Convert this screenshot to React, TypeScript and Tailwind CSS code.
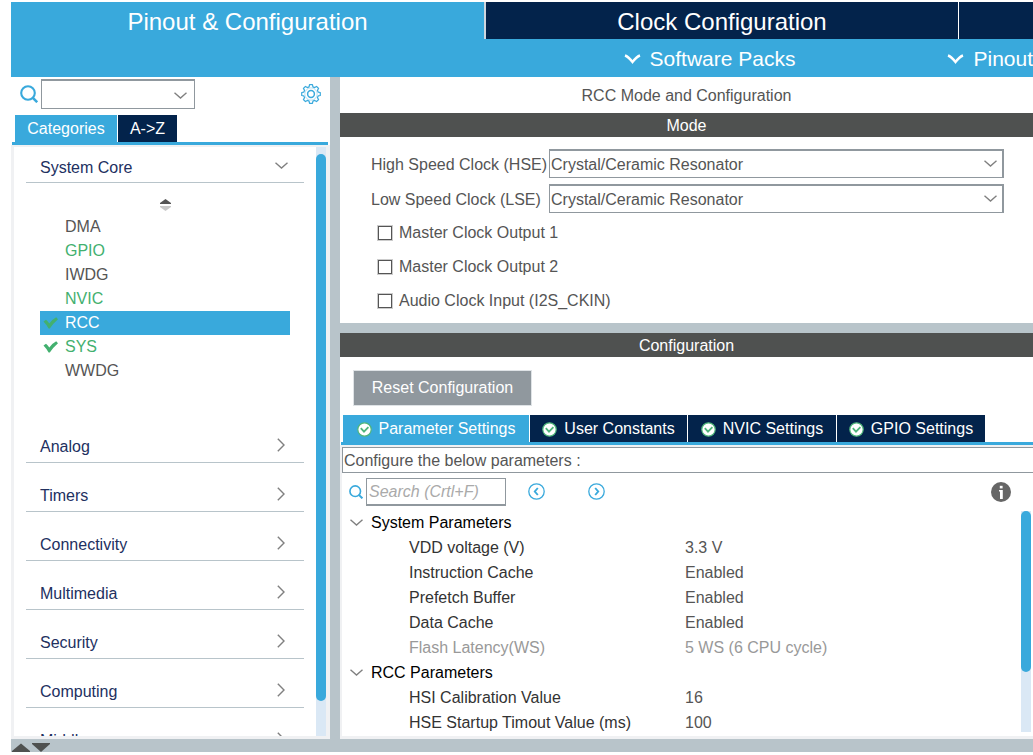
import React, { useState } from 'react';
import clsx from 'clsx';

type Peripheral = {
  name: string;
  configured?: boolean;
  checked?: boolean;
};

type Parameter = {
  name: string;
  value: string;
  readOnly?: boolean;
};

const peripherals: Peripheral[] = [
  { name: 'DMA' },
  { name: 'GPIO', configured: true },
  { name: 'IWDG' },
  { name: 'NVIC', configured: true },
  { name: 'RCC', configured: true, checked: true },
  { name: 'SYS', configured: true, checked: true },
  { name: 'WWDG' },
];

const categories = [
  'Analog',
  'Timers',
  'Connectivity',
  'Multimedia',
  'Security',
  'Computing',
  'Middleware',
];

const clockOutputs = ['Master Clock Output 1', 'Master Clock Output 2', 'Audio Clock Input (I2S_CKIN)'];

const settingsTabs = [
  { label: 'Parameter Settings', width: 'w-[187px]' },
  { label: 'User Constants', width: 'w-[158px]' },
  { label: 'NVIC Settings', width: 'w-[149px]' },
  { label: 'GPIO Settings', width: 'w-[149px]' },
];

const parameterGroups: { title: string; rows: Parameter[] }[] = [
  {
    title: 'System Parameters',
    rows: [
      { name: 'VDD voltage (V)', value: '3.3 V' },
      { name: 'Instruction Cache', value: 'Enabled' },
      { name: 'Prefetch Buffer', value: 'Enabled' },
      { name: 'Data Cache', value: 'Enabled' },
      { name: 'Flash Latency(WS)', value: '5 WS (6 CPU cycle)', readOnly: true },
    ],
  },
  {
    title: 'RCC Parameters',
    rows: [
      { name: 'HSI Calibration Value', value: '16' },
      { name: 'HSE Startup Timout Value (ms)', value: '100' },
    ],
  },
];

function ChevronDown({ className }: { className?: string }) {
  return (
    <svg viewBox="0 0 13 7" className={clsx('h-[7px] w-[13px] shrink-0', className)} fill="none">
      <path d="M0.5 0.8 L6.5 6 L12.5 0.8" stroke="currentColor" strokeWidth="1.4" />
    </svg>
  );
}

function ChevronRight() {
  return (
    <svg viewBox="0 0 8 14" className="h-[14px] w-2 shrink-0 text-[#808080]" fill="none">
      <path d="M0.8 0.8 L7 7 L0.8 13.2" stroke="currentColor" strokeWidth="1.4" />
    </svg>
  );
}

function MenuChevron() {
  return (
    <svg viewBox="0 0 17 10" className="h-[10px] w-[17px] shrink-0" fill="none">
      <path d="M1 1.5 C4 2.5 6.5 5.5 8.5 8 C10.5 5.5 13 2.5 16 1.5" stroke="currentColor" strokeWidth="2.4" />
    </svg>
  );
}

function SearchIcon({ className }: { className?: string }) {
  return (
    <svg viewBox="0 0 18 18" className={clsx('shrink-0 text-[#39a9dc]', className)} fill="none" stroke="currentColor">
      <circle cx="8" cy="8" r="6.8" strokeWidth="2.1" />
      <path d="M12.4 12.4 L17.2 17.2" strokeWidth="2.6" />
    </svg>
  );
}

// Eight teeth, four points each, around the centre of a 20x20 box
const gearPoints = Array.from({ length: 8 }, (_, tooth) =>
  [
    [-15, 7.4],
    [-9, 9.4],
    [9, 9.4],
    [15, 7.4],
  ]
    .map(([offset, radius]) => {
      const angle = ((tooth * 45 + offset) * Math.PI) / 180;
      return `${(10 + radius * Math.sin(angle)).toFixed(2)},${(10 - radius * Math.cos(angle)).toFixed(2)}`;
    })
    .join(' ')
).join(' ');

function GearIcon() {
  return (
    <svg viewBox="0 0 20 20" className="h-5 w-5" fill="none" stroke="currentColor" strokeLinejoin="round">
      <polygon points={gearPoints} strokeWidth="1.2" />
      <circle cx="10" cy="10" r="6.2" strokeWidth="0.6" opacity="0.6" />
      <circle cx="10" cy="10" r="3.4" strokeWidth="1.5" />
    </svg>
  );
}

function CheckMark() {
  return (
    <svg viewBox="0 0 15 12" className="h-3 w-[15px]" fill="#43b06f">
      <path d="M0.5 4.5 L3 2.8 Q5 4.5 6.3 6.6 Q9 2.5 13.2 0.3 L15 2.2 Q10.5 6 6.8 11.6 L5.6 11.6 Q3.4 7.5 0.5 4.5 Z" />
    </svg>
  );
}

function StatusIcon() {
  return (
    <svg viewBox="0 0 15 15" className="h-[15px] w-[15px] shrink-0" fill="none" stroke="#4fb57a">
      <circle cx="7.5" cy="7.5" r="6.7" fill="#fff" strokeWidth="1.2" />
      <path d="M3.8 6.2 L7 9.6 L11.4 5.2" strokeWidth="1.8" />
    </svg>
  );
}

function CircleArrow({ flip }: { flip?: boolean }) {
  return (
    <svg
      viewBox="0 0 17 17"
      className={clsx('h-[17px] w-[17px] text-[#39a9dc]', flip && 'rotate-180')}
      fill="none"
      stroke="currentColor"
    >
      <circle cx="8.5" cy="8.5" r="7.7" strokeWidth="1.3" />
      <path d="M9.8 5 L6.8 8.5 L9.8 12" strokeWidth="1.9" />
    </svg>
  );
}

function InfoIcon() {
  return (
    <svg viewBox="0 0 20 20" className="h-5 w-5">
      <circle cx="10" cy="10" r="10" fill="#666" />
      <rect x="8.8" y="3.8" width="2.8" height="2.6" fill="#fff" />
      <path d="M8 8 H11.8 V17 H9 V9.4 H8 Z" fill="#fff" />
    </svg>
  );
}

function SectionBar({ title }: { title: string }) {
  return (
    <h2 className="h-6 shrink-0 bg-[#4f5150] pt-px text-center text-base leading-6 text-white">{title}</h2>
  );
}

function ClockSelect({ id, label }: { id: string; label: string }) {
  return (
    <div className="flex items-center">
      <label htmlFor={id} className="w-[178px] shrink-0 pt-[2px] whitespace-nowrap">
        {label}
      </label>
      <div className="relative flex-1">
        <select
          id={id}
          className="block h-[29px] w-full appearance-none border border-t-2 border-r-2 border-[#90989e] bg-white pt-px pl-[1px] text-base"
        >
          <option>Crystal/Ceramic Resonator</option>
        </select>
        <ChevronDown className="pointer-events-none absolute top-[11px] right-[7px] text-[#808080]" />
      </div>
    </div>
  );
}

function Header() {
  return (
    <header className="shrink-0 text-white">
      <nav className="flex h-[37px] overflow-hidden text-2xl">
        <button className="w-[473px] shrink-0 bg-[#39a9dc] pt-[2px]">Pinout &amp; Configuration</button>
        <button className="w-[474px] shrink-0 border-l-2 border-[#cfd6de] bg-[#03234b] pt-[2px]">
          Clock Configuration
        </button>
        <button aria-label="Project Manager" className="flex-1 border-l border-white bg-[#03234b]" />
      </nav>
      <div className="flex h-[38px] items-center justify-end gap-[152px] overflow-hidden bg-[#39a9dc] pt-[2px] text-[21px]">
        <button className="flex items-center gap-[9px] whitespace-nowrap">
          <MenuChevron />
          Software Packs
        </button>
        <button className="flex items-center gap-[9px] whitespace-nowrap">
          <MenuChevron />
          Pinout
        </button>
      </div>
    </header>
  );
}

function Sidebar() {
  const [selected, setSelected] = useState('RCC');

  return (
    <aside className="flex w-[319px] shrink-0 flex-col">
      <div className="flex h-[38px] shrink-0 items-center pr-[9px] pb-1 pl-[9px]">
        <SearchIcon className="h-[18px] w-[18px]" />
        <div className="relative ml-[3px]">
          <select
            aria-label="Search peripheral"
            className="block h-[30px] w-[154px] appearance-none border border-t-2 border-[#90989e] bg-white"
          />
          <ChevronDown className="pointer-events-none absolute top-[13px] right-[8px] text-[#808080]" />
        </div>
        <button aria-label="Settings" className="ml-auto text-[#39a9dc]">
          <GearIcon />
        </button>
      </div>

      <div className="mr-[2px] ml-px flex shrink-0 gap-px border-b-[3px] border-[#39a9dc] pl-[3px] text-base text-white">
        <button className="h-[27px] w-[102px] bg-[#39a9dc] pt-px">Categories</button>
        <button className="h-[27px] w-[59px] bg-[#03234b] pt-px">A-&gt;Z</button>
      </div>

      <div className="flex min-h-0 flex-1 border-[3px] border-t-2 border-r-4 border-[#f0f1f3]">
        <div className="min-w-0 flex-1 overflow-hidden pr-3 pl-3">
          <button className="flex h-9 w-full items-end justify-between border-b border-[#b8c4ca] pr-4 pb-[2px] pl-[14px] text-[#22305f]">
            <span className="text-base leading-6">System Core</span>
            <ChevronDown className="mb-[11px] text-[#808080]" />
          </button>

          <div className="pr-[14px] pb-[31px] pl-[14px]">
            <button aria-label="Sort" className="mt-4 mb-1 block w-full">
              <svg viewBox="0 0 11 12" className="mx-auto h-3 w-[11px]">
                <path d="M5.5 0 L11 4 V5 H0 V4 Z" fill="#555" />
                <path d="M0 7 H11 V8 L5.5 12 L0 8 Z" fill="#c8c8c8" />
              </svg>
            </button>
            <ul className="text-base">
              {peripherals.map(p => (
                <li key={p.name}>
                  <button
                    onClick={() => setSelected(p.name)}
                    className={clsx(
                      'flex h-6 w-full items-center',
                      selected === p.name && 'bg-[#39a9dc] text-white',
                      selected !== p.name && (p.configured ? 'text-[#43b06f]' : 'text-[#555]')
                    )}
                  >
                    <span className="flex w-[25px] justify-start pl-[3px]">
                      {p.checked && <CheckMark />}
                    </span>
                    {p.name}
                  </button>
                </li>
              ))}
            </ul>
          </div>

          {categories.map(name => (
            <button
              key={name}
              className="flex h-[49px] w-full items-end justify-between border-b border-[#b8c4ca] pr-[19px] pb-[3px] pl-[14px] text-[#22305f]"
            >
              <span className="text-base leading-6">{name}</span>
              <span className="mb-[7px]">
                <ChevronRight />
              </span>
            </button>
          ))}
        </div>
        <div className="w-[10px] shrink-0 bg-[#dae8f5] pt-[7px]">
          <div className="h-[94%] rounded-full bg-[#39a9dc]" />
        </div>
      </div>
    </aside>
  );
}

function ModePanel() {
  return (
    <section className="shrink-0 text-base text-[#555]">
      <h1 className="h-9 pt-px text-center text-base leading-9">RCC Mode and Configuration</h1>
      <SectionBar title="Mode" />
      <div className="flex h-[186px] flex-col pt-3 pr-[29px] pl-[31px]">
        <div className="flex flex-col gap-[6px]">
          <ClockSelect id="hse" label="High Speed Clock (HSE)" />
          <ClockSelect id="lse" label="Low Speed Clock (LSE)" />
        </div>
        <div className="mt-2 flex flex-col gap-[10px] pl-[6px]">
          {clockOutputs.map(label => (
            <label key={label} className="flex h-6 items-center gap-[6px]">
              <input
                type="checkbox"
                className="m-px h-[14px] w-[14px] appearance-none border border-[#555] bg-white ring-1 ring-[#ccc]"
              />
              {label}
            </label>
          ))}
        </div>
      </div>
    </section>
  );
}

function ParameterTable() {
  return (
    <table className="min-w-0 flex-1 table-fixed self-start text-left text-base">
      <colgroup>
        <col className="w-[343px]" />
        <col />
      </colgroup>
      {parameterGroups.map(group => (
        <tbody key={group.title}>
          <tr className="h-[25px]">
            <th colSpan={2} className="p-0 font-normal text-black">
              <button className="flex h-[25px] items-center gap-2 pl-2">
                <ChevronDown className="text-[#808080]" />
                {group.title}
              </button>
            </th>
          </tr>
          {group.rows.map(row => (
            <tr key={row.name} className={clsx('h-[25px]', row.readOnly ? 'text-[#999]' : 'text-[#333]')}>
              <td className="p-0 pl-[67px] leading-6">{row.name}</td>
              <td className={clsx('p-0 leading-6', !row.readOnly && 'text-[#555]')}>{row.value}</td>
            </tr>
          ))}
        </tbody>
      ))}
    </table>
  );
}

function ConfigurationPanel() {
  const [activeTab, setActiveTab] = useState('Parameter Settings');

  return (
    <section className="flex min-h-0 flex-1 flex-col">
      <SectionBar title="Configuration" />
      <div className="shrink-0 pt-[13px] pb-[9px] pl-[13px]">
        <button className="h-9 w-[179px] border border-[#dfe3e6] bg-[#90989e] text-base text-white">
          Reset Configuration
        </button>
      </div>

      <div className="ml-px flex shrink-0 overflow-hidden border-b-[3px] border-[#39a9dc] pl-[2px] text-white">
        {settingsTabs.map(tab => (
          <button
            key={tab.label}
            onClick={() => setActiveTab(tab.label)}
            className={clsx(
              'flex h-[27px] shrink-0 items-center justify-center gap-[7px] border-r border-white pt-px text-base',
              tab.width,
              activeTab === tab.label ? 'bg-[#39a9dc]' : 'bg-[#03234b]'
            )}
          >
            <StatusIcon />
            {tab.label}
          </button>
        ))}
      </div>

      <div className="flex min-h-0 flex-1 flex-col border-t-2 border-b-[3px] border-l-2 border-[#f0f1f3]">
        <p className="h-[26px] shrink-0 border border-r-0 border-[#90989e] pt-px pl-px text-base leading-6 text-[#555]">
          Configure the below parameters :
        </p>
        <div className="flex h-[37px] shrink-0 items-center pr-[22px] pl-[7px]">
          <SearchIcon className="h-[14px] w-[14px]" />
          <input
            aria-label="Search parameter"
            placeholder="Search (Crtl+F)"
            className="ml-[3px] h-7 w-[140px] border border-b-2 border-[#90989e] pt-[2px] pl-[2px] text-base italic placeholder:text-[#aaa]"
          />
          <button aria-label="Previous" className="ml-[22px]">
            <CircleArrow />
          </button>
          <button aria-label="Next" className="ml-[43px]">
            <CircleArrow flip />
          </button>
          <button aria-label="Information" className="ml-auto">
            <InfoIcon />
          </button>
        </div>
        <div className="flex min-h-0 flex-1 overflow-hidden">
          <ParameterTable />
          <div className="mt-px mr-[2px] mb-1 w-[10px] shrink-0 bg-[#dae8f5]">
            <div className="h-[73%] rounded-full bg-[#39a9dc]" />
          </div>
        </div>
      </div>
    </section>
  );
}

function App() {
  return (
    <div className="flex h-screen flex-col overflow-hidden bg-white pt-[2px] pb-[3px] pl-[11px] font-['Liberation_Sans',Arial,sans-serif]">
      <Header />
      <main className="flex min-h-0 flex-1">
        <Sidebar />
        <div className="w-[10px] shrink-0 bg-[#b8c4ca]" />
        <div className="flex min-w-0 flex-1 flex-col">
          <ModePanel />
          <div className="h-[10px] shrink-0 bg-[#b8c4ca]" />
          <ConfigurationPanel />
        </div>
      </main>

      {/* Collapse handles for the pane below */}
      <footer className="flex h-[13px] shrink-0 items-end gap-[2px] bg-[#b8c4ca] pl-px">
        <button aria-label="Expand">
          <svg viewBox="0 0 18 9" className="block h-[9px] w-[18px]">
            <path d="M9 0.5 L18 8 V9 H0 V8 Z" fill="#4f5150" />
          </svg>
        </button>
        <button aria-label="Collapse">
          <svg viewBox="0 0 18 9" className="block h-[9px] w-[18px]">
            <path d="M0 0 H18 V1 L9 9 L0 1 Z" fill="#4f5150" />
          </svg>
        </button>
      </footer>
    </div>
  );
}

export default App;
